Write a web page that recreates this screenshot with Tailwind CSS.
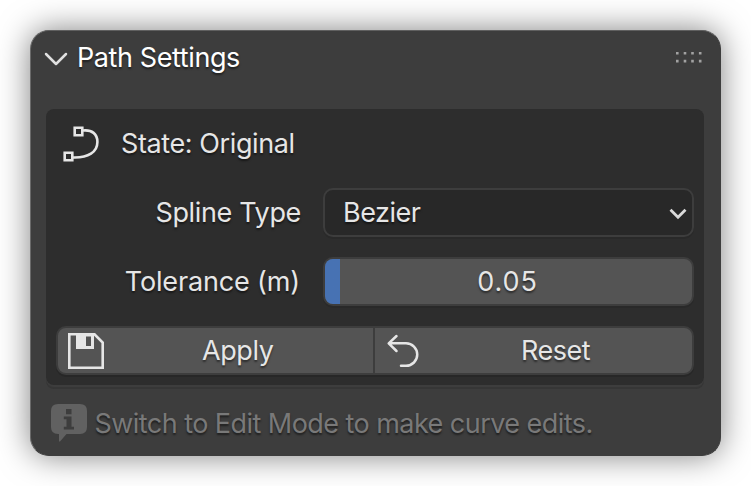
<!DOCTYPE html>
<html lang="en">
<head>
<meta charset="utf-8">
<title>Path Settings</title>
<script src="https://cdn.jsdelivr.net/npm/@tailwindcss/browser@4"></script>
</head>
<body class="h-[486px] overflow-hidden bg-white pt-[30px] pl-[30px]">
<main class="flex h-[426px] w-[691px] flex-col rounded-[19px] border border-[#4a4a4a] border-l-[#6a6a6a] border-t-[#606060] border-r-[#3d3d3d] border-b-[#3d3d3d] bg-[#3d3d3d] px-[15px] font-['Inter',sans-serif] text-[27px] leading-[32px] whitespace-nowrap text-[#e6e6e6] shadow-[0_0_32px_rgba(0,0,0,0.5)] [text-shadow:0_2px_2px_rgba(0,0,0,0.5)]">
  <header class="flex h-[78px] items-start pt-[11px]">
    <svg class="mt-[8px] -ml-[2px] h-[18px] w-[24px]" viewBox="0 0 24 18" fill="none" stroke="#e0e0e0" stroke-width="2.5" stroke-linecap="round" stroke-linejoin="round"><path d="M2 4 12 14 22 4"/></svg>
    <h1 class="ml-[9px] tracking-[-0.4px] text-white">Path Settings</h1>
    <svg class="mt-[10px] mr-[2px] ml-auto h-[12px] w-[27px]" viewBox="0 0 27 12" fill="#a2a2a2"><path d="M0 0h2.6v2.6H0zM7.7 0h2.6v2.6H7.7zM15.2 0h2.6v2.6h-2.6zM22.9 0h2.6v2.6h-2.6zM0 7.8h2.6v2.6H0zM7.7 7.8h2.6v2.6H7.7zM15.2 7.8h2.6v2.6h-2.6zM22.9 7.8h2.6v2.6h-2.6z"/></svg>
  </header>
  <section class="flex h-[276px] w-[658px] flex-col rounded-[8px] bg-[#2d2d2d] px-[10px] shadow-[0_2px_0_#3d3d3d,0_4px_0_#363636]">
    <div class="flex h-[79px] items-start pt-[19px]">
      <svg class="mt-[-3px] ml-[6px] h-[38px] w-[38px]" viewBox="62 125 38 38" fill="none" stroke="#e6e6e6" stroke-width="2.6"><path d="M74.7 127.7h7.6v7.6h-7.6zM64.7 152.700h7.6v7.6h-7.6z"/><path d="M83 130.500C92 129.500 97.400 134 97.400 142c0 10-9 16-24.400 15.500"/></svg>
      <span class="ml-[21px] tracking-[-0.4px]">State: Original</span>
    </div>
    <div class="flex h-[49px] items-center">
      <span class="w-[245px] text-right tracking-[-0.35px]">Spline Type</span>
      <div class="ml-[22px] flex h-[49px] w-[371px] items-center rounded-[10px] border-2 border-[#3d3d3d] bg-[#282828] pr-[5px] pl-[18px] shadow-[0_2px_0_#292929]">
        <span class="tracking-[-0.5px]">Bezier</span>
        <svg class="mt-[3px] ml-auto h-[12px] w-[18px]" viewBox="0 0 18 12" fill="none" stroke="#dadada" stroke-width="2.8"><path d="M1.500 1.800 9 9.200 16.500 1.800"/></svg>
      </div>
    </div>
    <div class="mt-[20px] flex h-[49px] items-center">
      <span class="w-[244px] text-right tracking-[-0.15px]">Tolerance (m)</span>
      <div class="ml-[23px] h-[49px] w-[371px] rounded-[10px] border-2 border-[#3d3d3d] bg-[#545454] shadow-[0_2px_0_#292929]">
        <div class="flex h-full items-center justify-center rounded-[8px] bg-linear-to-r from-[#4772b3] from-[15px] to-transparent to-[15px]">
          <span class="mr-[2px] tracking-[0.9px]">0.05</span>
        </div>
      </div>
    </div>
    <div class="mt-[20px] flex h-[49px] w-[638px] rounded-[10px] border-2 border-[#3d3d3d] bg-[#545454] shadow-[0_2px_0_#272727]">
      <div class="flex w-[317px] items-center border-r-2 border-[#3d3d3d]">
        <svg class="ml-[10px] h-[36px] w-[36px]" viewBox="0 0 36 36" fill="none" stroke="#e6e6e6" stroke-width="2.600"><path d="M1.300 1.300H26.500L34.700 9.500V34.700H1.300z"/><path fill="#e6e6e6" stroke="none" fill-rule="evenodd" d="M8 1h18v15H8zM18 3.500v9.500h5V3.500z"/></svg>
        <span class="ml-[98px] tracking-[-0.4px]">Apply</span>
      </div>
      <div class="flex flex-1 items-center">
        <svg class="ml-[11px] h-[36px] w-[34px]" viewBox="387 333 34 36" fill="none" stroke="#e6e6e6" stroke-width="2.500" stroke-linecap="round" stroke-linejoin="round"><path d="M397.500 336 389.700 343.300 397.500 351M390 343.300h17a11.200 11.200 0 0 1 0 22.500H402"/></svg>
        <span class="ml-[101px] tracking-[-0.500px]">Reset</span>
      </div>
    </div>
  </section>
  <footer class="mt-[18px] flex text-[#797979]">
    <svg class="ml-[5px] h-[40px] w-[36px]" viewBox="0 0 36 40"><path fill="#616161" d="M7 1H29Q36 1 36 8V24Q36 31 29 31H15.500L9 38.500H8V31H7Q0 31 0 24V8Q0 1 7 1z"/><path fill="#3d3d3d" d="M15 6h5.500v5.300H15zM12.800 13.500h7.700v10.200H23v2.800H12.800v-2.800h2.700v-7.400h-2.700z"/></svg>
    <span class="mt-[5px] ml-[7.500px] tracking-[-0.550px]">Switch to Edit Mode to make curve edits.</span>
  </footer>
</main>
</body>
</html>
